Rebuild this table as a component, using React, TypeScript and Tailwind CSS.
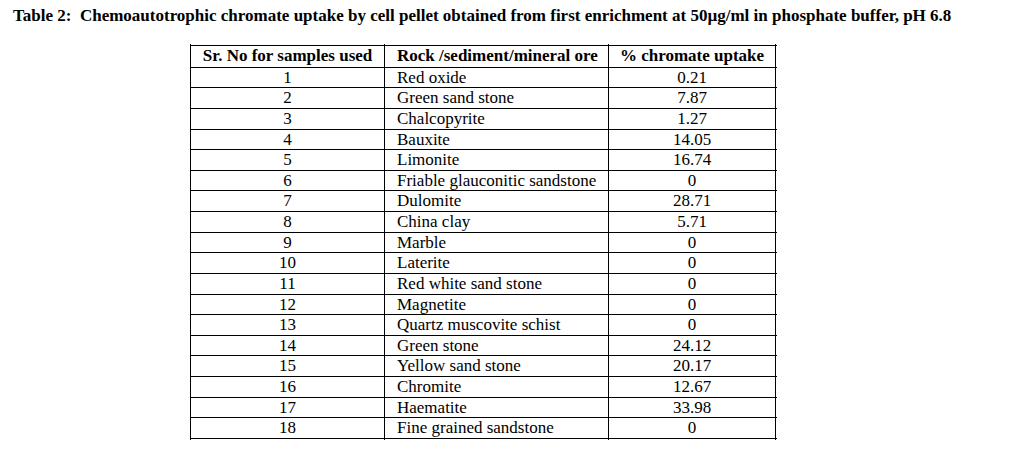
import React from "react";

const rows: [string, string, string][] = [
  ["1", "Red oxide", "0.21"],
  ["2", "Green sand stone", "7.87"],
  ["3", "Chalcopyrite", "1.27"],
  ["4", "Bauxite", "14.05"],
  ["5", "Limonite", "16.74"],
  ["6", "Friable glauconitic sandstone", "0"],
  ["7", "Dulomite", "28.71"],
  ["8", "China clay", "5.71"],
  ["9", "Marble", "0"],
  ["10", "Laterite", "0"],
  ["11", "Red white sand stone", "0"],
  ["12", "Magnetite", "0"],
  ["13", "Quartz muscovite schist", "0"],
  ["14", "Green stone", "24.12"],
  ["15", "Yellow sand stone", "20.17"],
  ["16", "Chromite", "12.67"],
  ["17", "Haematite", "33.98"],
  ["18", "Fine grained sandstone", "0"],
];

const cols = "grid grid-cols-[194px_224px_168px]";

function Stub() {
  return (
    <div className={`${cols} h-[1px]`}>
      <div className="border-l border-black" />
      <div className="border-l border-black" />
      <div className="border-l border-r border-black" />
    </div>
  );
}

export default function App() {
  return (
    <div className="w-[1013px] h-[451px] bg-white text-black font-['Liberation_Serif',serif] overflow-hidden">
      <div className="pl-[13px] pt-[6px] text-[17px] leading-[20px] font-bold whitespace-pre">
        {"Table 2:  Chemoautotrophic chromate uptake by cell pellet obtained from first enrichment at 50\u00b5g/ml in phosphate buffer, pH 6.8"}
      </div>
      <div className="ml-[190px] mt-[18px] w-[587px]">
        <Stub />
        <div className="border-t border-black">
          <div className={`${cols} h-[21.63px] border-b border-black text-[17px] leading-[20px] font-bold items-center`}>
            <div className="border-l border-black h-full flex items-center justify-center">Sr. No for samples used</div>
            <div className="border-l border-black h-full flex items-center pl-[12px]">Rock /sediment/mineral ore</div>
            <div className="border-l border-r border-black h-full flex items-center justify-center">% chromate uptake</div>
          </div>
          {rows.map((r) => (
            <div key={r[0]} className={`${cols} h-[20.63px] border-b border-black text-[17px] leading-[20px]`}>
              <div className="border-l border-black h-full flex items-center justify-center">{r[0]}</div>
              <div className="border-l border-black h-full flex items-center pl-[12px]">{r[1]}</div>
              <div className="border-l border-r border-black h-full flex items-center justify-center">{r[2]}</div>
            </div>
          ))}
        </div>
        <Stub />
      </div>
    </div>
  );
}
